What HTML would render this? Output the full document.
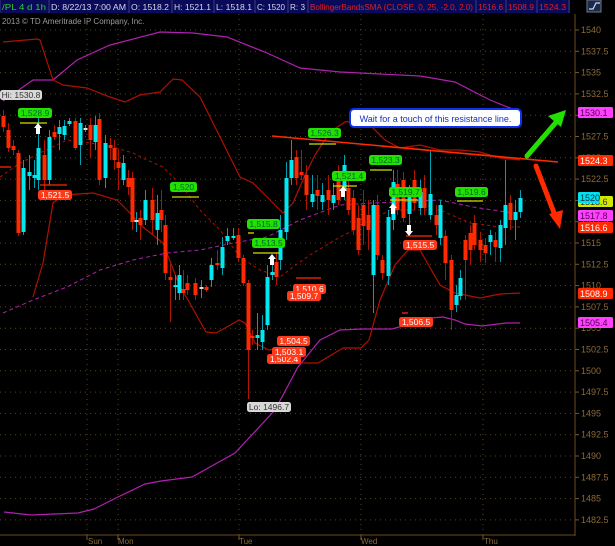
<!DOCTYPE html>
<html><head><meta charset="utf-8"><style>
html,body{margin:0;padding:0;background:#000;width:615px;height:546px;overflow:hidden}
svg{display:block}
text{font-family:"Liberation Sans",sans-serif}
</style></head><body>
<svg id="c" width="615" height="546" xmlns="http://www.w3.org/2000/svg"></svg>
<script>
var s='';
function Y(p){return 30+(1540-p)*8.52;}
// header
s+='<rect x="0" y="0" width="570" height="13" fill="#0a0a5a"/>';
var hs=[[0,'/PL 4 d 1h','#2ecc2e',49],[49,'D: 8/22/13 7:00 AM','#d8d8e8',129],[129,'O: 1518.2','#d8d8e8',172],[172,'H: 1521.1','#d8d8e8',214],[214,'L: 1518.1','#d8d8e8',255],[255,'C: 1520','#d8d8e8',288],[288,'R: 3','#d8d8e8',308],[308,'BollingerBandsSMA (CLOSE, 0, 25, -2.0, 2.0)','#e02020',476],[476,'1516.6','#e02020',506],[506,'1508.9','#e02020',537],[537,'1524.3','#e02020',569]];
hs.forEach(function(h){s+='<line x1="'+h[0]+'" y1="0" x2="'+h[0]+'" y2="13" stroke="#3a3a80"/>';s+='<text x="'+(h[0]+2)+'" y="10" font-size="8" textLength="'+(h[3]-h[0]-5)+'" lengthAdjust="spacingAndGlyphs" fill="'+h[2]+'">'+h[1]+'</text>';});
s+='<line x1="569" y1="0" x2="569" y2="13" stroke="#3a3a80"/>';
s+='<rect x="587" y="0" width="14" height="12" fill="#1a2a4a" stroke="#778"/><path d="M589 9h4l3-6h4" stroke="#cde" fill="none" stroke-width="1.2"/>';
s+='<text x="2" y="24" font-size="8" fill="#9a9a9a">2013 © TD Ameritrade IP Company, Inc.</text>';
// grid
for(var p=1540;p>=1482.5;p-=2.5){var y=Y(p);s+='<line x1="0" y1="'+y+'" x2="575" y2="'+y+'" stroke="#5a4520" stroke-dasharray="1,4"/>';
s+='<line x1="575" y1="'+y+'" x2="579" y2="'+y+'" stroke="#7a5a2a"/>';
s+='<text x="581" y="'+(y+3)+'" font-size="9" fill="#8a6a3a">'+p+'</text>';}
[87,118,239,361,483].forEach(function(x){s+='<line x1="'+x+'" y1="14" x2="'+x+'" y2="535" stroke="#5a4520" stroke-dasharray="1,4"/><line x1="'+x+'" y1="535" x2="'+x+'" y2="540" stroke="#7a5a2a"/>';});
s+='<line x1="575" y1="14" x2="575" y2="536" stroke="#6b4c1f"/><line x1="0" y1="535" x2="575" y2="535" stroke="#6b4c1f"/>';
[['Sun',88],['Mon',118],['Tue',239],['Wed',361],['Thu',484]].forEach(function(d){s+='<text x="'+d[1]+'" y="544" font-size="8" fill="#8a6a3a">'+d[0]+'</text>';});
function pl(pts,col,w,dash){s+='<polyline points="'+pts+'" fill="none" stroke="'+col+'" stroke-width="'+w+'"'+(dash?' stroke-dasharray="'+dash+'"':'')+'/>';}
// bands
pl('3,101 33,80 53,80 77,60 110,45 160,32 193,33 227,37 267,53 300,68 340,72 380,74 420,76 455,82 490,100 520,112','#b020b0',1.2);
pl('4,512 31,515 78,513 94,509 118,497 145,484 161,481 192,477 235,453 275,410 298,367 320,340 340,330 361,329 392,329 431,318 443,317 455,320 465,324 482,326 506,323 520,323','#b020b0',1.2);
pl('3,313 33,300 67,287 100,270 133,260 167,253 200,250 233,243 267,237 300,220 340,205 373,203 440,200 473,207 513,213','#b020b0',1,'4,3');
pl('3,42 37,39 40,40 53,80 63,85 87,88 110,97 125,102 140,95 160,92 173,79 182,80 200,97 220,137 240,177 253,183 267,197 283,213 293,203 305,175 315,155 330,132 345,122 365,120 385,140 400,148 420,145 440,150 460,150 480,152 500,158 520,160','#b01000',1.2);
pl('0,177 20,163 40,153 67,140 90,143 113,147 133,153 147,160 163,167 173,177 187,193 200,210 220,230 240,257 260,270 280,277 293,267 310,255 330,243 340,237 360,227 390,210 440,210 470,223 500,227 520,227','#b01000',1,'3,3');
pl('33,297 43,263 53,203 63,195 93,193 117,200 127,210 143,227 163,243 180,287 188,300 206,332 216,333 225,328 239,320 245,323 255,343 269,350 282,348 302,363 318,363 343,348 361,348 369,340 380,300 395,265 408,250 420,250 440,285 455,293 480,298 500,294 520,293','#b01000',1.2);
var C=[[3,116,127,'r',110,132],[8,130,148,'r',123,152],[13,146,150,'r',140,155],[18,153,233,'r',150,236],[23,168,232,'c',160,235],[29,172,176,'c',155,190],[34,175,178,'c',160,188],[38,148,180,'c',113,190],[44,155,180,'r',140,190],[49,137,180,'c',130,185],[54,132,137,'r',125,140],[59,127,134,'c',120,150],[64,126,135,'c',120,140],[69,121,124,'c',118,126],[75,121,148,'r',118,150],[80,123,145,'c',118,165],[85,128,129,'w',125,132],[90,125,140,'r',118,158],[95,125,142,'c',116,150],[99,119,180,'r',113,185],[105,143,178,'c',135,188],[110,145,148,'r',138,160],[114,148,160,'r',140,170],[118,162,168,'r',150,190],[123,163,180,'c',155,185],[128,178,187,'r',170,195],[132,178,222,'r',172,230],[136,220,222,'w',212,232],[140,218,225,'r',210,240],[145,200,220,'c',190,225],[152,200,220,'r',188,235],[157,213,230,'c',195,245],[161,210,220,'r',190,232],[165,225,273,'r',215,280],[170,277,280,'r',265,322],[175,285,287,'c',275,300],[179,275,293,'c',265,300],[183,289,293,'r',270,300],[187,283,290,'r',275,295],[195,283,295,'r',278,300],[201,287,288,'w',280,298],[206,287,290,'r',285,292],[211,265,280,'c',258,287],[217,263,265,'r',250,270],[222,247,268,'c',237,275],[227,236,241,'c',228,245],[233,236,237,'c',228,240],[238,235,258,'r',228,262],[243,258,283,'r',255,286],[248,283,350,'r',280,399],[252,336,338,'r',330,345],[257,335,338,'c',313,350],[262,330,342,'c',315,350],[267,277,325,'c',265,330],[272,272,275,'c',260,280],[276,262,277,'r',252,285],[280,230,260,'c',215,270],[286,178,232,'c',162,240],[291,160,178,'c',140,185],[296,157,178,'r',150,185],[301,172,175,'r',150,180],[306,175,195,'r',165,210],[312,194,202,'c',175,207],[317,190,196,'r',175,210],[322,195,202,'c',183,210],[328,190,200,'r',175,215],[333,195,203,'c',183,210],[338,175,200,'r',165,205],[344,165,190,'c',155,200],[348,188,210,'r',175,215],[353,198,230,'r',190,235],[358,218,250,'r',205,255],[363,205,226,'r',190,245],[368,215,230,'r',200,250],[373,205,275,'c',200,313],[377,205,255,'r',195,260],[382,260,273,'r',255,280],[388,217,276,'c',210,285],[393,182,220,'c',170,230],[397,184,210,'r',170,215],[403,180,218,'r',172,222],[409,191,214,'c',185,225],[414,180,203,'r',170,210],[420,192,208,'c',180,215],[424,188,208,'r',175,215],[430,194,215,'c',150,220],[436,215,225,'r',205,235],[440,205,238,'c',200,245],[445,236,263,'r',230,280],[451,260,310,'r',255,330],[456,295,305,'c',285,312],[460,278,296,'c',270,300],[465,240,260,'r',235,300],[470,233,250,'r',225,265],[474,223,245,'r',215,250],[480,240,250,'r',232,262],[485,245,253,'r',238,263],[490,235,242,'c',230,255],[495,240,247,'r',232,262],[500,225,248,'c',220,262],[505,205,228,'c',160,245],[510,203,220,'r',195,230],[515,212,220,'c',200,240],[520,198,212,'c',190,218]];
C.forEach(function(c){var col=c[3]=='r'?'#ff2a00':(c[3]=='c'?'#00e8f0':'#ddd');
s+='<line x1="'+(c[0]+0.5)+'" y1="'+c[4]+'" x2="'+(c[0]+0.5)+'" y2="'+c[5]+'" stroke="'+(c[3]=='r'?'#b01500':'#00a0b0')+'"/>';
s+='<rect x="'+(c[0]-1.5)+'" y="'+c[1]+'" width="4" height="'+Math.max(2,c[2]-c[1])+'" fill="'+col+'"/>';});
s+='<line x1="272" y1="136" x2="558" y2="162" stroke="#ff2a00" stroke-width="1.6"/>';
[[20,47,123,'#d0e000'],[172,199,197,'#d0e000'],[309,336,144,'#d0e000'],[248,254,233,'#d0e000'],[253,280,253,'#d0e000'],[333,357,186,'#d0e000'],[370,392,170,'#d0e000'],[390,418,200,'#d0e000'],[457,483,201,'#d0e000'],[40,67,185,'#ff2a00'],[0,11,167,'#ff2a00'],[296,321,278,'#ff2a00'],[406,432,236,'#ff2a00'],[402,408,313,'#ff2a00']].forEach(function(l){s+='<line x1="'+l[0]+'" y1="'+l[2]+'" x2="'+l[1]+'" y2="'+l[2]+'" stroke="'+l[3]+'" stroke-width="1.3"/>';});
function lab(x,y,w,t,bg,fg){s+='<rect x="'+x+'" y="'+y+'" width="'+w+'" height="10" rx="2.5" fill="'+bg+'"/><text x="'+(x+w/2)+'" y="'+(y+8)+'" font-size="8.5" text-anchor="middle" fill="'+fg+'">'+t+'</text>';}
var G='#22e000';
lab(18,108,34,'1,528.9',G,'#063');lab(170,182,27,'1,520',G,'#063');lab(308,128,33,'1,526.3',G,'#063');
lab(247,219,33,'1,515.8',G,'#063');lab(252,238,33,'1,513.5',G,'#063');lab(332,171,34,'1,521.4',G,'#063');
lab(369,155,33,'1,523.3',G,'#063');lab(389,187,33,'1,519.7',G,'#063');lab(455,187,33,'1,519.6',G,'#063');
var R='#ff3a1a';
lab(38,190,34,'1,521.5',R,'#fff');lab(293,284,33,'1,510.6',R,'#fff');lab(287,291,34,'1,509.7',R,'#fff');
lab(267,354,34,'1,502.4',R,'#fff');lab(272,347,34,'1,503.1',R,'#fff');lab(277,336,33,'1,504.5',R,'#fff');
lab(403,240,34,'1,515.5',R,'#fff');lab(399,317,34,'1,506.5',R,'#fff');
lab(0,90,42,'Hi: 1530.8','#d8d8d8','#333');lab(247,402,44,'Lo: 1496.7','#d8d8d8','#333');
function up(x,y){s+='<path d="M'+x+' '+y+'l4 5h-2v6h-4v-6h-2z" fill="#fff"/>';}
function dn(x,y){s+='<path d="M'+x+' '+y+'l4 -5h-2v-6h-4v6h-2z" fill="#fff"/>';}
up(38,123);up(272,254);up(343,186);up(393,203);dn(409,236);
function rl(y,t,bg,fg,w){s+='<rect x="578" y="'+y+'" width="'+(w||35)+'" height="11" rx="1.5" fill="'+bg+'"/><text x="580" y="'+(y+9)+'" font-size="9" fill="'+fg+'">'+t+'</text>';}
rl(107,'1530.1','#ff40ff','#500050');rl(155,'1524.3','#ff2a00','#fff');rl(196,'1518.6','#d0e800','#333');rl(192,'1520','#00e0f0','#003040',22);
rl(210,'1517.8','#ff40ff','#500050');rl(222,'1516.6','#ff2a00','#fff');rl(288,'1508.9','#ff2a00','#fff');rl(317,'1505.4','#ff40ff','#500050');
s+='<rect x="350" y="109" width="171" height="18" rx="4" fill="#fff" stroke="#1030f0" stroke-width="2"/><text x="435.5" y="122" font-size="9" text-anchor="middle" fill="#1030c0">Wait for a touch of this resistance line.</text>';
s+='<line x1="527" y1="156" x2="558" y2="120" stroke="#22e000" stroke-width="5" stroke-linecap="round"/><path d="M566 110 L548 116 L561 127 Z" fill="#22e000"/>';
s+='<line x1="536" y1="166" x2="556" y2="218" stroke="#ff2a00" stroke-width="5" stroke-linecap="round"/><path d="M560 229 L549 214 L563 210 Z" fill="#ff2a00"/>';
document.getElementById('c').innerHTML=s;
</script>
</body></html>
